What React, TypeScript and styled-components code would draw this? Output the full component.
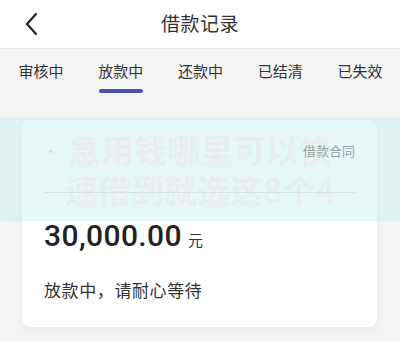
import React from "react";
import styled, { createGlobalStyle } from "styled-components";

const Global = createGlobalStyle`
  html, body { margin: 0; padding: 0; background: #f4f4f4; }
  body { font-family: "Noto Sans CJK SC", "Noto Sans", sans-serif; }
  * { box-sizing: border-box; }
`;

const Page = styled.div`
  position: relative;
  width: 400px;
  height: 341px;
  overflow: hidden;
  background: #f4f4f4;
`;

const Header = styled.header`
  height: 49px;
  background: #ffffff;
  border-bottom: 1px solid #e6e6e6;
  display: grid;
  grid-template-columns: 60px 1fr 60px;
  align-items: center;
`;

const Back = styled.button`
  border: 0;
  background: none;
  padding: 0 0 0 24px;
  height: 100%;
  display: flex;
  align-items: center;
  color: #222;
`;

const Title = styled.h1`
  margin: 0;
  text-align: center;
  font-size: 19px;
  font-weight: 400;
  color: #333;
  letter-spacing: 0.5px;
  padding-bottom: 4px;
`;

const Tabs = styled.nav`
  display: flex;
  justify-content: space-between;
  padding: 11px 17px 0 18px;
  height: 70px;
`;

const Tab = styled.div<{ $active?: boolean }>`
  position: relative;
  font-size: 15px;
  line-height: 22px;
  color: #333;
  width: 46px;
  text-align: center;
  &::after {
    content: "";
    display: ${(p) => (p.$active ? "block" : "none")};
    margin: 7px auto 0;
    width: 44px;
    height: 4px;
    border-radius: 2px;
    background: #4654ae;
  }
`;

const Card = styled.section`
  margin: 1px 23px 0 22px;
  height: 207px;
  background: #ffffff;
  border-radius: 8px;
  box-shadow: 0 2px 10px rgba(0, 0, 0, 0.06);
  padding: 19px 22px 0 22px;
`;

const TopRow = styled.div`
  display: flex;
  justify-content: space-between;
  align-items: center;
  height: 22px;
`;

const Faint = styled.span`
  font-size: 13px;
  color: #c8c8c8;
`;

const Contract = styled.span`
  font-size: 13px;
  color: #555;
`;

const Divider = styled.div`
  margin-top: 31px;
  height: 1px;
  background: #d9dede;
`;

const Amount = styled.div`
  margin-top: 26px;
  display: flex;
  align-items: baseline;
  gap: 6px;
  color: #222;
`;

const Number = styled.span`
  font-family: "Roboto", "Liberation Sans", sans-serif;
  font-size: 30px;
  line-height: 34px;
  font-weight: 500;
  letter-spacing: 0.4px;
`;

const Unit = styled.span`
  font-size: 15px;
  color: #333;
`;

const Status = styled.div`
  margin-top: 24px;
  font-size: 17px;
  color: #333;
  letter-spacing: 0.6px;
`;

const Watermark = styled.div`
  position: absolute;
  left: 0;
  right: 0;
  top: 117px;
  height: 104px;
  background: rgba(205, 240, 242, 0.5);
  display: flex;
  flex-direction: column;
  align-items: center;
  justify-content: center;
  pointer-events: none;
`;

const WmLine = styled.div`
  font-family: "Noto Sans CJK SC", sans-serif;
  font-size: 33px;
  font-weight: 700;
  line-height: 40px;
  color: rgba(255, 170, 175, 0.12);
  white-space: nowrap;
`;

export default function App() {
  const tabs = ["审核中", "放款中", "还款中", "已结清", "已失效"];
  return (
    <Page>
      <Global />
      <Header>
        <Back aria-label="返回">
          <svg width="14" height="24" viewBox="0 0 14 24" fill="none">
            <path d="M12 2 L3 12 L12 22" stroke="#222" strokeWidth="2.2" strokeLinecap="round" strokeLinejoin="round" />
          </svg>
        </Back>
        <Title>借款记录</Title>
        <div />
      </Header>
      <Tabs>
        {tabs.map((t) => (
          <Tab key={t} $active={t === "放款中"}>
            {t}
          </Tab>
        ))}
      </Tabs>
      <Card>
        <TopRow>
          <Faint>·</Faint>
          <Contract>借款合同</Contract>
        </TopRow>
        <Divider />
        <Amount>
          <Number>30,000.00</Number>
          <Unit>元</Unit>
        </Amount>
        <Status>放款中，请耐心等待</Status>
      </Card>
      <Watermark>
        <WmLine>急用钱哪里可以快</WmLine>
        <WmLine>速借到就选这8个4</WmLine>
      </Watermark>
    </Page>
  );
}
